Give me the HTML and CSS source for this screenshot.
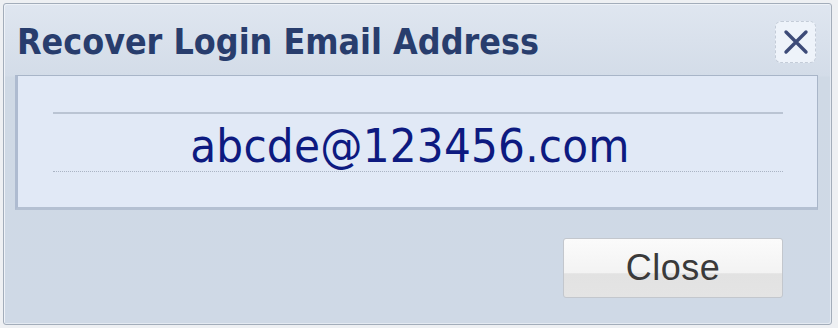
FILE: index.html
```html
<!DOCTYPE html>
<html>
<head>
<meta charset="utf-8">
<link rel="stylesheet" href="styles.css">
</head>
<body>
<div class="dialog">
  <div class="header">
    <h1 class="title">Recover Login Email Address</h1>
    <button class="x-btn" aria-label="Close">
      <svg width="26" height="26" viewBox="0 0 26 26"><path d="M3 3 L23 23 M23 3 L3 23" stroke="#3d4b78" stroke-width="3.4" stroke-linecap="round" fill="none"/></svg>
    </button>
  </div>
  <div class="panel">
    <div class="field"><span class="email">abcde@123456.com</span></div>
  </div>
  <div class="footer">
    <button class="close-btn">Close</button>
  </div>
</div>
</body>
</html>
```
FILE: styles.css
```css
html, body {
  margin: 0;
  padding: 0;
}
body {
  background: #eef0f3;
  width: 838px;
  height: 328px;
  overflow: hidden;
}
.dialog {
  box-sizing: border-box;
  margin: 3px 0 0 3px;
  width: 829px;
  height: 322px;
  border: 1px solid #a3adba;
  border-radius: 3px;
  box-shadow: inset 1px 1px 0 #eef2f8, inset -1px -1px 0 #e4eaf2;
  background: linear-gradient(to bottom, #dfe6f0 0px, #d3dce8 72px, #cfd9e5 73px, #cfd9e6 100%);
  display: flex;
  flex-direction: column;
}
.header {
  height: 71px;
  display: flex;
  align-items: flex-start;
  justify-content: space-between;
  padding: 0 15px 0 13px;
}
.title {
  margin: 0;
  padding-top: 17px;
  font-family: "DejaVu Sans Condensed", "DejaVu Sans", sans-serif;
  font-stretch: condensed;
  font-weight: bold;
  font-size: 35.5px;
  line-height: 42px;
  color: #283d6d;
  letter-spacing: 0;
}
.x-btn {
  margin-top: 17px;
  width: 41px;
  height: 42px;
  padding: 0;
  border: 1px dashed #c4ccd8;
  border-radius: 6px;
  background: #eef3fa;
  display: flex;
  align-items: center;
  justify-content: center;
}
.panel {
  margin: 0 13px 0 11px;
  height: 135px;
  box-sizing: border-box;
  border: 1px solid #a8b5c8;
  border-left: 3px solid #aebbd0;
  border-bottom: 3px solid #b4c0d2;
  background: #e1e9f6;
  padding: 36px 34px 0 35px;
}
.field {
  height: 57px;
  border-top: 2px solid #bac4d3;
  border-bottom: 1px dotted #aab4c4;
  display: flex;
  align-items: center;
  justify-content: center;
}
.email {
  font-family: "DejaVu Sans Condensed", "DejaVu Sans", sans-serif;
  font-stretch: condensed;
  font-size: 47px;
  line-height: 57px;
  color: #0d1a80;
  padding-top: 5px;
  margin-right: 16px;
  letter-spacing: 0.2px;
}
.footer {
  flex: 1;
  display: flex;
  justify-content: flex-end;
  align-items: flex-start;
  padding: 28px 48px 0 0;
}
.close-btn {
  width: 220px;
  height: 60px;
  box-sizing: border-box;
  border: 1px solid #c3c7cd;
  border-radius: 3px;
  background: linear-gradient(to bottom, #fbfbfb 0%, #f3f3f3 58%, #e2e2e2 60%, #e4e4e4 100%);
  font-family: "Liberation Sans", Arial, sans-serif;
  font-size: 36px;
  color: #3a3a3a;
  padding: 0;
  letter-spacing: 0.5px;
}
```
